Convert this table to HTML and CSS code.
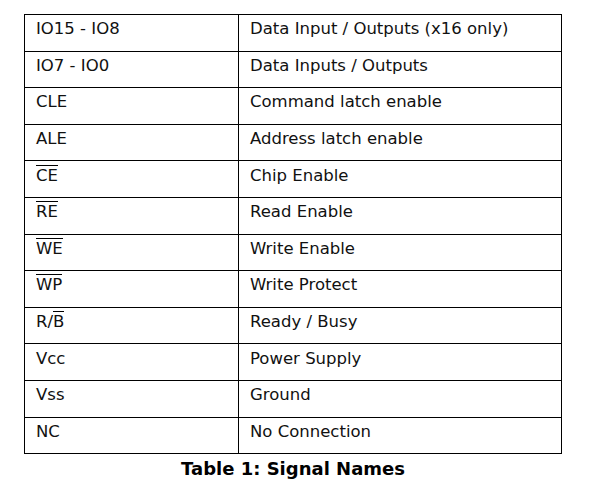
FILE: index.html
```html
<!DOCTYPE html>
<html>
<head>
<meta charset="utf-8">
<link rel="stylesheet" href="styles.css">
</head>
<body>
<div class="wrap">
<table class="sig">
<tr><td class="c1">IO15 - IO8</td><td>Data Input / Outputs (x16 only)</td></tr>
<tr><td class="c1">IO7 - IO0</td><td>Data Inputs / Outputs</td></tr>
<tr><td class="c1">CLE</td><td>Command latch enable</td></tr>
<tr><td class="c1">ALE</td><td>Address latch enable</td></tr>
<tr><td class="c1"><span class="ov">CE</span></td><td>Chip Enable</td></tr>
<tr><td class="c1"><span class="ov">RE</span></td><td>Read Enable</td></tr>
<tr><td class="c1"><span class="ov">WE</span></td><td>Write Enable</td></tr>
<tr><td class="c1"><span class="ov">WP</span></td><td>Write Protect</td></tr>
<tr><td class="c1">R/<span class="ov">B</span></td><td>Ready / Busy</td></tr>
<tr><td class="c1">Vcc</td><td>Power Supply</td></tr>
<tr><td class="c1">Vss</td><td>Ground</td></tr>
<tr><td class="c1">NC</td><td>No Connection</td></tr>
</table>
<div class="caption">Table 1: Signal Names</div>
</div>
</body>
</html>
```
FILE: styles.css
```css
html, body {
  margin: 0;
  padding: 0;
  background: #fff;
}
.wrap {
  width: 538px;
  margin: 14px 0 0 24px;
  font-family: "DejaVu Sans", sans-serif;
  color: #111;
}
.sig {
  border-collapse: collapse;
  width: 538px;
  table-layout: fixed;
}
.sig td {
  border: 1.5px solid #000;
  height: 36.6px;
  box-sizing: border-box;
  padding: 0 0 8px 11px;
  font-size: 16.5px;
  vertical-align: middle;
}
.sig td.c1 {
  width: 214px;
}
.ov {
  display: inline-block;
  border-top: 1.5px solid #000;
  line-height: 14px;
  padding-top: 3px;
  margin-top: -1px;
}
.caption {
  text-align: center;
  font-weight: bold;
  font-size: 18px;
  margin-top: 4px;
  color: #000;
}
```
